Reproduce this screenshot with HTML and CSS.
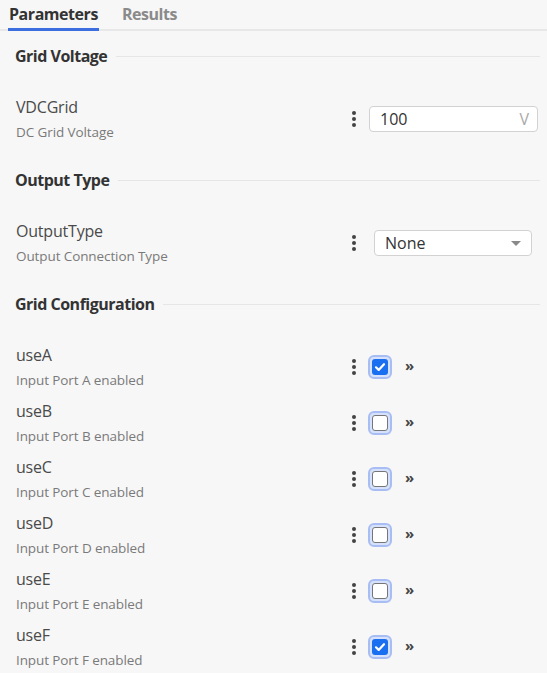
FILE: index.html
```html
<!DOCTYPE html>
<html lang="en">
<head>
<meta charset="utf-8">
<title>Parameters</title>
<link rel="stylesheet" href="styles.css">
</head>
<body>
<div class="tabs">
  <span class="tab active">Parameters</span>
  <span class="tab">Results</span>
</div>
<div class="content">
  <section class="group">
    <div class="group-head"><h2>Grid Voltage</h2><span class="rule"></span></div>
    <div class="param">
      <div class="info"><div class="name">VDCGrid</div><div class="desc">DC Grid Voltage</div></div>
      <div class="ctrl">
        <span class="dots"><i></i><i></i><i></i></span>
        <div class="input"><span class="val">100</span><span class="unit">V</span></div>
      </div>
    </div>
  </section>
  <section class="group">
    <div class="group-head"><h2>Output Type</h2><span class="rule"></span></div>
    <div class="param">
      <div class="info"><div class="name">OutputType</div><div class="desc">Output Connection Type</div></div>
      <div class="ctrl">
        <span class="dots"><i></i><i></i><i></i></span>
        <div class="select"><span class="val">None</span><span class="caret"></span></div>
      </div>
    </div>
  </section>
  <section class="group">
    <div class="group-head"><h2>Grid Configuration</h2><span class="rule"></span></div>
    <div class="param">
      <div class="info"><div class="name">useA</div><div class="desc">Input Port A enabled</div></div>
      <div class="ctrl">
        <span class="dots"><i></i><i></i><i></i></span>
        <span class="cb-ring"><span class="cb checked"><svg viewBox="0 0 16 16" width="16" height="16"><path d="M4 8.3l2.7 2.6L12 5.2" fill="none" stroke="#fff" stroke-width="2.2" stroke-linecap="round" stroke-linejoin="round"/></svg></span></span>
        <span class="more">»</span>
      </div>
    </div>
    <div class="param">
      <div class="info"><div class="name">useB</div><div class="desc">Input Port B enabled</div></div>
      <div class="ctrl">
        <span class="dots"><i></i><i></i><i></i></span>
        <span class="cb-ring"><span class="cb"></span></span>
        <span class="more">»</span>
      </div>
    </div>
    <div class="param">
      <div class="info"><div class="name">useC</div><div class="desc">Input Port C enabled</div></div>
      <div class="ctrl">
        <span class="dots"><i></i><i></i><i></i></span>
        <span class="cb-ring"><span class="cb"></span></span>
        <span class="more">»</span>
      </div>
    </div>
    <div class="param">
      <div class="info"><div class="name">useD</div><div class="desc">Input Port D enabled</div></div>
      <div class="ctrl">
        <span class="dots"><i></i><i></i><i></i></span>
        <span class="cb-ring"><span class="cb"></span></span>
        <span class="more">»</span>
      </div>
    </div>
    <div class="param">
      <div class="info"><div class="name">useE</div><div class="desc">Input Port E enabled</div></div>
      <div class="ctrl">
        <span class="dots"><i></i><i></i><i></i></span>
        <span class="cb-ring"><span class="cb"></span></span>
        <span class="more">»</span>
      </div>
    </div>
    <div class="param">
      <div class="info"><div class="name">useF</div><div class="desc">Input Port F enabled</div></div>
      <div class="ctrl">
        <span class="dots"><i></i><i></i><i></i></span>
        <span class="cb-ring"><span class="cb checked"><svg viewBox="0 0 16 16" width="16" height="16"><path d="M4 8.3l2.7 2.6L12 5.2" fill="none" stroke="#fff" stroke-width="2.2" stroke-linecap="round" stroke-linejoin="round"/></svg></span></span>
        <span class="more">»</span>
      </div>
    </div>
  </section>
</div>
</body>
</html>
```
FILE: styles.css
```css
* { box-sizing: border-box; }
html, body { margin: 0; padding: 0; }
body {
  background: #f7f7f7;
  font-family: "Open Sans", "Noto Sans", sans-serif;
  color: #444;
  width: 547px;
  overflow: hidden;
}
.tabs {
  display: flex;
  gap: 22px;
  padding-left: 8px;
  height: 31px;
  border-bottom: 2px solid #e8e8e8;
}
.tab {
  font-size: 16px;
  font-weight: 700;
  color: #8a8a8a;
  line-height: 28px;
  height: 31px;
  padding: 0 1px;
  letter-spacing: -0.45px;
}
.tab.active {
  color: #333;
  border-bottom: 3px solid #3c6ee0;
}
.content {
  padding: 9px 7px 0 15px;
}
.group + .group { margin-top: 22px; }
.group-head {
  display: flex;
  align-items: center;
  height: 32px;
  gap: 9px;
}
.group-head h2 {
  margin: 0;
  font-size: 16px;
  font-weight: 700;
  color: #333;
  letter-spacing: -0.5px;
}
.rule {
  flex: 1;
  height: 1px;
  background: #e6e6e6;
}
.param {
  display: flex;
  align-items: center;
  justify-content: space-between;
  height: 46px;
  margin-top: 24px;
}
.param + .param { margin-top: 10px; }
.info { padding-left: 1px; }
.name {
  font-size: 16px;
  line-height: 22px;
  color: #4a4a4a;
  letter-spacing: -0.2px;
}
.desc {
  font-size: 13.5px;
  line-height: 20px;
  margin-top: 4px;
  color: #7a7a7a;
  letter-spacing: -0.1px;
}
.ctrl {
  width: 192px;
  display: flex;
  align-items: center;
  gap: 10px;
  padding-left: 1px;
}
.dots {
  display: flex;
  flex-direction: column;
  align-items: center;
  gap: 2px;
  width: 10px;
}
.dots i {
  width: 4px;
  height: 4px;
  border-radius: 50%;
  background: #444;
}
.input, .select {
  height: 26px;
  background: #fff;
  border: 1px solid #d2d2d2;
  border-radius: 4px;
  display: flex;
  align-items: center;
  justify-content: space-between;
  padding: 0 8px 0 10px;
  font-size: 16px;
  color: #333;
}
.input { width: 169px; }
.select { width: 158px; margin-left: 5px; }
.unit { color: #aaa; font-size: 16px; }
.caret {
  width: 0; height: 0;
  border-left: 5px solid transparent;
  border-right: 5px solid transparent;
  border-top: 5px solid #8a8a8a;
  margin-right: 2px;
}
.cb-ring {
  width: 24px;
  height: 24px;
  border-radius: 6px;
  background: #d6e1fb;
  border: 2px solid #a8bdf4;
  display: flex;
  align-items: center;
  justify-content: center;
  margin-left: -1px;
}
.cb {
  width: 16px;
  height: 16px;
  border-radius: 3px;
  background: #fff;
  border: 1.5px solid #767676;
  display: block;
}
.cb.checked {
  background: #1a6ff0;
  border: none;
}
.cb svg { display: block; }
.more {
  font-size: 15px;
  font-weight: 700;
  color: #444;
  line-height: 1;
  margin-left: 3px;
  margin-top: -3px;
}
```
